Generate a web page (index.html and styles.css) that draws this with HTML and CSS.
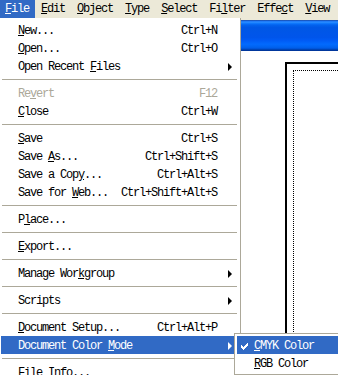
FILE: index.html
```html
<!DOCTYPE html>
<html>
<head>
    <link rel="stylesheet" href="styles.css">
</head>
<body>
    <div class="menubar">
        <div class="bar-item open"><u>F</u>ile</div>
        <div class="bar-item"><u>E</u>dit</div>
        <div class="bar-item"><u>O</u>bject</div>
        <div class="bar-item"><u>T</u>ype</div>
        <div class="bar-item"><u>S</u>elect</div>
        <div class="bar-item">Fi<u>l</u>ter</div>
        <div class="bar-item">Effe<u>c</u>t</div>
        <div class="bar-item"><u>V</u>iew</div>
    </div>
    <div class="workspace">
        <div class="menu">
            <div class="item"><span class="label"><u>N</u>ew...</span><span class="key">Ctrl+N</span><span class="more"></span></div>
            <div class="item"><span class="label"><u>O</u>pen...</span><span class="key">Ctrl+O</span><span class="more"></span></div>
            <div class="item"><span class="label">Open Recent <u>F</u>iles</span><span class="more"><i class="arrow"></i></span></div>
            <div class="sep"></div>
            <div class="item disabled"><span class="label">Re<u>v</u>ert</span><span class="key">F12</span><span class="more"></span></div>
            <div class="item"><span class="label"><u>C</u>lose</span><span class="key">Ctrl+W</span><span class="more"></span></div>
            <div class="sep"></div>
            <div class="item"><span class="label"><u>S</u>ave</span><span class="key">Ctrl+S</span><span class="more"></span></div>
            <div class="item"><span class="label">Save <u>A</u>s...</span><span class="key">Ctrl+Shift+S</span><span class="more"></span></div>
            <div class="item"><span class="label">Save a Cop<u>y</u>...</span><span class="key">Ctrl+Alt+S</span><span class="more"></span></div>
            <div class="item"><span class="label">Save for <u>W</u>eb...</span><span class="key">Ctrl+Shift+Alt+S</span><span class="more"></span></div>
            <div class="sep"></div>
            <div class="item"><span class="label">P<u>l</u>ace...</span><span class="more"></span></div>
            <div class="sep"></div>
            <div class="item"><span class="label"><u>E</u>xport...</span><span class="more"></span></div>
            <div class="sep"></div>
            <div class="item"><span class="label">Manage Wor<u>k</u>group</span><span class="more"><i class="arrow"></i></span></div>
            <div class="sep"></div>
            <div class="item"><span class="label">Scripts</span><span class="more"><i class="arrow"></i></span></div>
            <div class="sep"></div>
            <div class="item"><span class="label"><u>D</u>ocument Setup...</span><span class="key">Ctrl+Alt+P</span><span class="more"></span></div>
            <div class="item active">
                <span class="label">Document Color <u>M</u>ode</span><span class="more"><i class="arrow"></i></span>
                <div class="submenu">
                    <div class="item active">
                        <span class="check">
                            <svg width="7" height="7" viewBox="0 0 7 7"><path d="M0 2h1v1h1v1h1v-1h1v-1h1v-1h1v-1h1v3h-1v1h-1v1h-1v1h-1v1h-1v-1h-1v-1h-1v-1h-1z" fill="#fff"/></svg>
                        </span>
                        <span class="label"><u>C</u>MYK Color</span>
                    </div>
                    <div class="item"><span class="check"></span><span class="label"><u>R</u>GB Color</span></div>
                </div>
            </div>
            <div class="sep"></div>
            <div class="item"><span class="label">File Info...</span><span class="more"></span></div>
        </div>
        <div class="canvas">
            <div class="titlebar"></div>
            <div class="doc-area">
                <div class="artboard">
                    <div class="page"></div>
                </div>
            </div>
        </div>
    </div>
</body>
</html>
```

FILE: styles.css
```css
body {
        margin: 0;
        padding: 0;
        width: 338px;
        height: 375px;
        overflow: hidden;
        background-color: #fff;
        font-family: "Liberation Mono", "DejaVu Sans Mono", monospace;
        font-size: 12px;
        letter-spacing: -1.2px;
        color: #000;
    }

    u {
        text-decoration: underline;
        text-underline-offset: 1px;
    }

    .menubar {
        display: flex;
        height: 18px;
        line-height: 19px;
        background-color: #ece9d8;
    }

    .bar-item {
        padding: 0 6px;
        white-space: nowrap;
    }

    .bar-item:first-child {
        padding-left: 5px;
    }

    .bar-item.open {
        background-color: #316ac5;
        color: #fff;
    }

    .workspace {
        display: flex;
        height: 357px;
    }

    .menu {
        width: 236px;
        padding: 3px 3px 0 1px;
        border-right: 1px solid #aca899;
        background-color: #fff;
        flex-shrink: 0;
    }

    .item {
        position: relative;
        display: flex;
        align-items: center;
        height: 16px;
        line-height: 16px;
        padding: 2px 0 0 17px;
        white-space: nowrap;
    }

    .item .label {
        flex: 1;
    }

    .item .key {
        padding-right: 1px;
    }

    .item .more {
        width: 19px;
        height: 16px;
        display: flex;
        align-items: center;
        padding-left: 10px;
        box-sizing: border-box;
    }

    .arrow {
        width: 0;
        height: 0;
        margin-top: -1px;
        border-top: 4px solid transparent;
        border-bottom: 4px solid transparent;
        border-left: 4px solid #000;
    }

    .item.disabled {
        color: #aca899;
    }

    .item.active {
        background-color: #316ac5;
        color: #fff;
    }

    .item.active .arrow {
        border-left-color: #fff;
    }

    .sep {
        height: 1px;
        margin: 4px 0 4px 1px;
        background-color: #aca899;
    }

    .submenu {
        position: absolute;
        left: 233px;
        top: -3px;
        width: 110px;
        padding: 2px;
        border: 1px solid #aca899;
        background-color: #fff;
        color: #000;
    }

    .submenu .item {
        padding-left: 0;
    }

    .submenu .check {
        width: 17px;
        height: 16px;
        display: flex;
        align-items: center;
        padding-left: 4px;
        box-sizing: border-box;
    }

    .canvas {
        flex: 1;
        background-color: #ece9d8;
        padding-top: 2px;
        display: flex;
        flex-direction: column;
    }

    .titlebar {
        height: 31px;
        background: linear-gradient(#3b5a8c 0, #0058ee 3%, #3593ff 6%, #127dff 10%, #0262ee 16%, #0057e5 24%, #0055eb 56%, #005bf5 66%, #026afe 78%, #0062ef 88%, #0052d6 93%, #0040ab 96%, #003092 100%);
    }

    .doc-area {
        flex: 1;
        background-color: #fff;
        padding: 11px 0 0 44px;
    }

    .artboard {
        height: 100%;
        border-top: 2px solid #000;
        border-left: 2px solid #000;
        padding: 6px 0 0 6px;
        box-sizing: border-box;
    }

    .page {
        height: 100%;
        border-top: 1px dotted #000;
        border-left: 1px dotted #000;
    }
```
